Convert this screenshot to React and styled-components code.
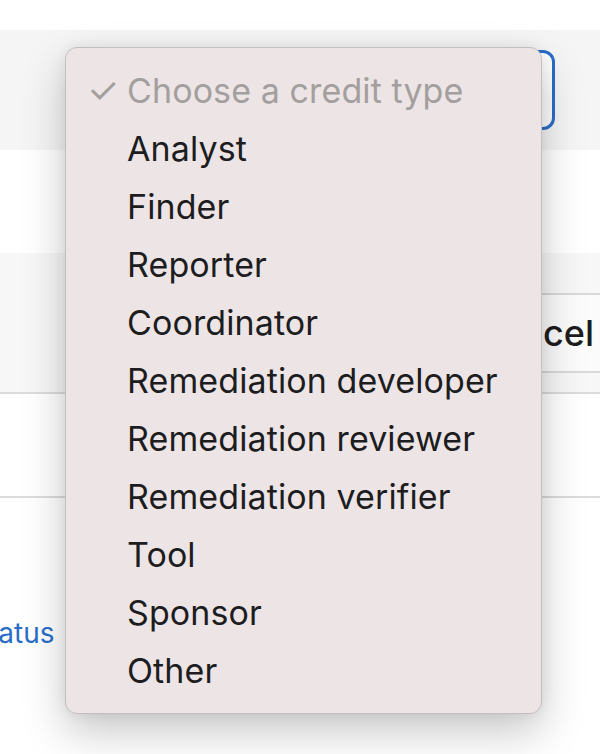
import React from "react";
import styled, { createGlobalStyle } from "styled-components";

const GlobalStyle = createGlobalStyle`
  html, body {
    margin: 0;
    padding: 0;
    background: #ffffff;
    font-family: Inter, "Liberation Sans", sans-serif;
  }
`;

const Page = styled.div`
  position: relative;
  width: 600px;
  height: 754px;
  overflow: hidden;
  background: #ffffff;
  padding-top: 30px;
  box-sizing: border-box;
`;

const FieldBand = styled.div`
  height: 120px;
  background: #f5f5f6;
  display: flex;
  align-items: center;
  justify-content: flex-end;
  padding-right: 45px;
`;

const SelectBox = styled.div`
  width: 470px;
  height: 80px;
  box-sizing: border-box;
  border: 3px solid #2a6ec8;
  border-radius: 12px;
  background: #ffffff;
`;

const Spacer = styled.div`
  height: 103px;
`;

const ActionsBand = styled.div`
  height: 141px;
  background: #f7f7f8;
  display: flex;
  justify-content: flex-end;
  align-items: flex-start;
  padding-top: 40px;
  box-sizing: border-box;
  border-bottom: 2px solid #dcdcdc;
`;

const CancelButton = styled.button`
  height: 80px;
  margin-right: -82px;
  padding: 0 86px 0 120px;
  background: #fbfbfb;
  border: 2px solid #d9d9d9;
  border-radius: 10px;
  font-family: Inter, "Liberation Sans", sans-serif;
  font-size: 36px;
  font-weight: 500;
  color: #1d1d1f;
`;

const Row = styled.div`
  height: 102px;
  border-bottom: 2px solid #dcdcdc;
`;

const StatusRow = styled.div`
  padding-top: 118px;
`;

const StatusLink = styled.a`
  display: inline-block;
  margin-left: -29px;
  font-size: 28px;
  color: #2a6ec8;
  text-decoration: none;
`;

const Menu = styled.ul`
  position: absolute;
  left: 65px;
  top: 47px;
  width: 477px;
  margin: 0;
  padding: 13px 0 14px;
  box-sizing: border-box;
  list-style: none;
  background: #ede5e5;
  border: 1px solid #c4bfbf;
  border-radius: 12px;
  box-shadow: 0 18px 44px rgba(0, 0, 0, 0.22), 0 0 14px rgba(0, 0, 0, 0.07);
`;

const Item = styled.li`
  position: relative;
  height: 58px;
  display: flex;
  align-items: center;
  padding-left: 61px;
  font-size: 34px;
  letter-spacing: 0.1px;
  color: ${(p) => (p.$placeholder ? "#a39f9f" : "#1d1d1f")};
  white-space: nowrap;
`;

const Check = styled.span`
  position: absolute;
  left: 21px;
  top: 50%;
  transform: translateY(-50%);
  font-size: 36px;
  color: #a39f9f;
`;

const options = [
  "Analyst",
  "Finder",
  "Reporter",
  "Coordinator",
  "Remediation developer",
  "Remediation reviewer",
  "Remediation verifier",
  "Tool",
  "Sponsor",
  "Other",
];

export default function App() {
  return (
    <>
      <GlobalStyle />
      <Page>
        <FieldBand>
          <SelectBox />
        </FieldBand>
        <Spacer />
        <ActionsBand>
          <CancelButton>Cancel</CancelButton>
        </ActionsBand>
        <Row />
        <StatusRow>
          <StatusLink href="#">Status</StatusLink>
        </StatusRow>

        <Menu>
          <Item $placeholder>
            <Check>✓</Check>
            Choose a credit type
          </Item>
          {options.map((o) => (
            <Item key={o}>{o}</Item>
          ))}
        </Menu>
      </Page>
    </>
  );
}
